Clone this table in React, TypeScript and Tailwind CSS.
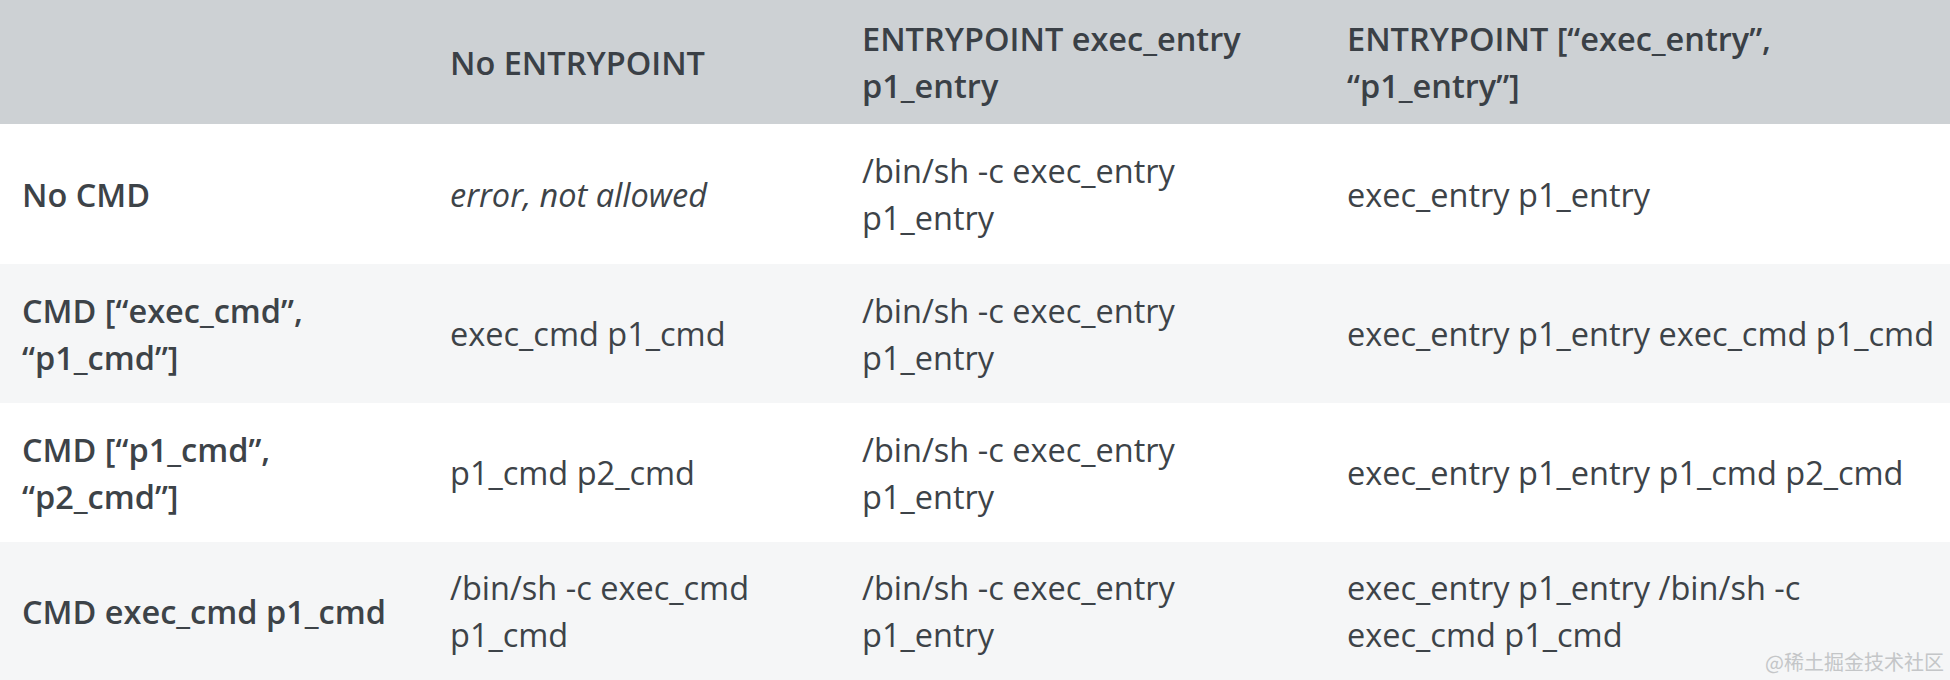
import React from "react";

const cols = "grid grid-cols-[428px_412px_485px_625px]";

type Row = { head: React.ReactNode; a: React.ReactNode; b: React.ReactNode; c: React.ReactNode; bg: string; h: string };

const rows: Row[] = [
  {
    head: "No CMD",
    a: <em className="italic">error, not allowed</em>,
    b: (
      <>
        /bin/sh -c exec_entry
        <br />
        p1_entry
      </>
    ),
    c: "exec_entry p1_entry",
    bg: "bg-white",
    h: "h-[140px]",
  },
  {
    head: (
      <>
        CMD [“exec_cmd”,
        <br />
        “p1_cmd”]
      </>
    ),
    a: "exec_cmd p1_cmd",
    b: (
      <>
        /bin/sh -c exec_entry
        <br />
        p1_entry
      </>
    ),
    c: "exec_entry p1_entry exec_cmd p1_cmd",
    bg: "bg-[#f5f6f7]",
    h: "h-[139px]",
  },
  {
    head: (
      <>
        CMD [“p1_cmd”,
        <br />
        “p2_cmd”]
      </>
    ),
    a: "p1_cmd p2_cmd",
    b: (
      <>
        /bin/sh -c exec_entry
        <br />
        p1_entry
      </>
    ),
    c: "exec_entry p1_entry p1_cmd p2_cmd",
    bg: "bg-white",
    h: "h-[139px]",
  },
  {
    head: "CMD exec_cmd p1_cmd",
    a: (
      <>
        /bin/sh -c exec_cmd
        <br />
        p1_cmd
      </>
    ),
    b: (
      <>
        /bin/sh -c exec_entry
        <br />
        p1_entry
      </>
    ),
    c: (
      <>
        exec_entry p1_entry /bin/sh -c
        <br />
        exec_cmd p1_cmd
      </>
    ),
    bg: "bg-[#f5f6f7]",
    h: "h-[138px]",
  },
];

export default function App() {
  return (
    <div
      className="relative w-[1950px] h-[680px] overflow-hidden bg-white text-[#3d4348] text-[32.5px] leading-[47px]"
      style={{ fontFamily: '"Open Sans", "Noto Sans", sans-serif' }}
    >
      <div className={`${cols} h-[124px] bg-[#cdd1d4] font-[550] text-[#3a4046]`}>
        <div className="flex items-center pl-[22px]"></div>
        <div className="flex items-center pl-[22px]">No ENTRYPOINT</div>
        <div className="flex items-center pl-[22px]">
          <div>
            ENTRYPOINT exec_entry
            <br />
            p1_entry
          </div>
        </div>
        <div className="flex items-center pl-[22px]">
          <div>
            ENTRYPOINT [“exec_entry”,
            <br />
            “p1_entry”]
          </div>
        </div>
      </div>
      {rows.map((r, i) => (
        <div key={i} className={`${cols} ${r.h} ${r.bg}`}>
          <div className="flex items-center pl-[22px] font-[550]">
            <div>{r.head}</div>
          </div>
          <div className="flex items-center pl-[22px]">
            <div>{r.a}</div>
          </div>
          <div className="flex items-center pl-[22px]">
            <div>{r.b}</div>
          </div>
          <div className="flex items-center pl-[22px] whitespace-nowrap">
            <div>{r.c}</div>
          </div>
        </div>
      ))}
      <div
        className="absolute right-[6px] bottom-[4px] text-[20px] leading-[28px] text-[#c4c6c8]"
        style={{ fontFamily: '"Noto Sans CJK SC", sans-serif' }}
      >
        @稀土掘金技术社区
      </div>
    </div>
  );
}
